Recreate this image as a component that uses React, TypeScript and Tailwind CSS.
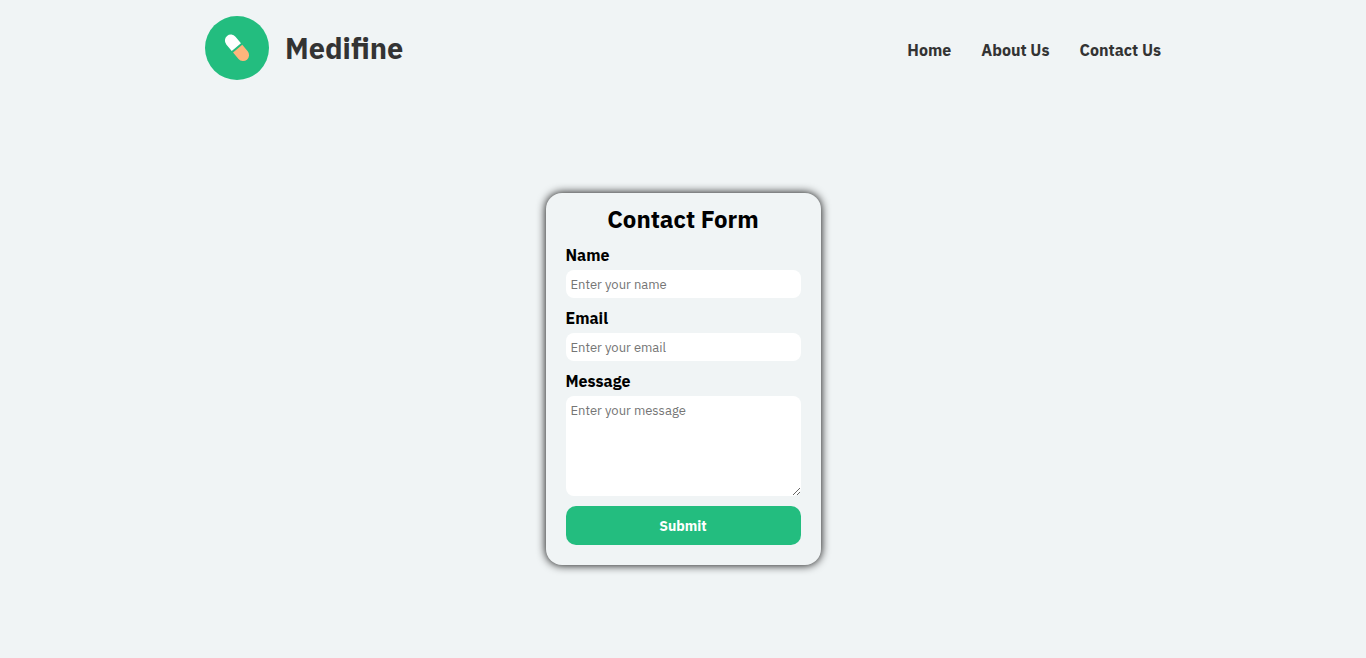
import React from "react";

const navLinks = [
  { label: "Home", href: "#home" },
  { label: "About Us", href: "#about" },
  { label: "Contact Us", href: "#contact" },
];

const labelClass = "mt-2.5 mb-[5px] text-base leading-5 font-bold text-black";
const fieldClass =
  "w-full rounded-lg bg-white px-[5px] text-[13px] leading-[18px] text-black placeholder:text-[#757575]";

function Logo() {
  return (
    <svg className="size-16" viewBox="0 0 64 64" aria-hidden="true">
      <circle cx="32" cy="32" r="32" fill="#23bd7f" />
      <g transform="translate(32 31.8) rotate(-40)">
        <path d="M-6 -1V-9.5A6 6 0 0 1 6 -9.5V-1Z" fill="#fff" />
        <path d="M-6 1V9.5A6 6 0 0 0 6 9.5V1Z" fill="#ffb57c" />
      </g>
    </svg>
  );
}

export default function App() {
  return (
    <div className="min-h-screen bg-[#f0f4f5] font-['IBM_Plex_Sans','Inter',sans-serif]">
      <header className="mx-auto flex w-[70%] items-center justify-between py-4">
        <a href="#home" className="flex items-center gap-4 text-[#333]">
          <Logo />
          <span className="text-[29px] leading-9 font-bold">Medifine</span>
        </a>
        <nav className="flex gap-[30px] pt-1">
          {navLinks.map((link) => (
            <a
              key={link.label}
              href={link.href}
              className="text-base leading-6 font-bold text-[#333]"
            >
              {link.label}
            </a>
          ))}
        </nav>
      </header>

      <main className="flex justify-center pt-[97px] pb-20">
        <form
          onSubmit={(e) => e.preventDefault()}
          className="flex w-[275px] flex-col rounded-2xl bg-[#f0f4f5] px-5 pt-2.5 pb-5 shadow-[0_0_10px_black]"
        >
          <h1 className="text-center text-2xl leading-8 font-bold text-black">
            Contact Form
          </h1>
          <label htmlFor="name" className={labelClass}>
            Name
          </label>
          <input
            id="name"
            type="text"
            placeholder="Enter your name"
            className={`${fieldClass} h-7`}
          />
          <label htmlFor="email" className={labelClass}>
            Email
          </label>
          <input
            id="email"
            type="email"
            placeholder="Enter your email"
            className={`${fieldClass} h-7`}
          />
          <label htmlFor="message" className={labelClass}>
            Message
          </label>
          <textarea
            id="message"
            placeholder="Enter your message"
            className={`${fieldClass} h-[100px] resize py-1.5`}
          />
          <button
            type="submit"
            className="mt-2.5 h-[39px] rounded-[10px] bg-[#23bd7f] text-sm font-bold text-white"
          >
            Submit
          </button>
        </form>
      </main>
    </div>
  );
}
